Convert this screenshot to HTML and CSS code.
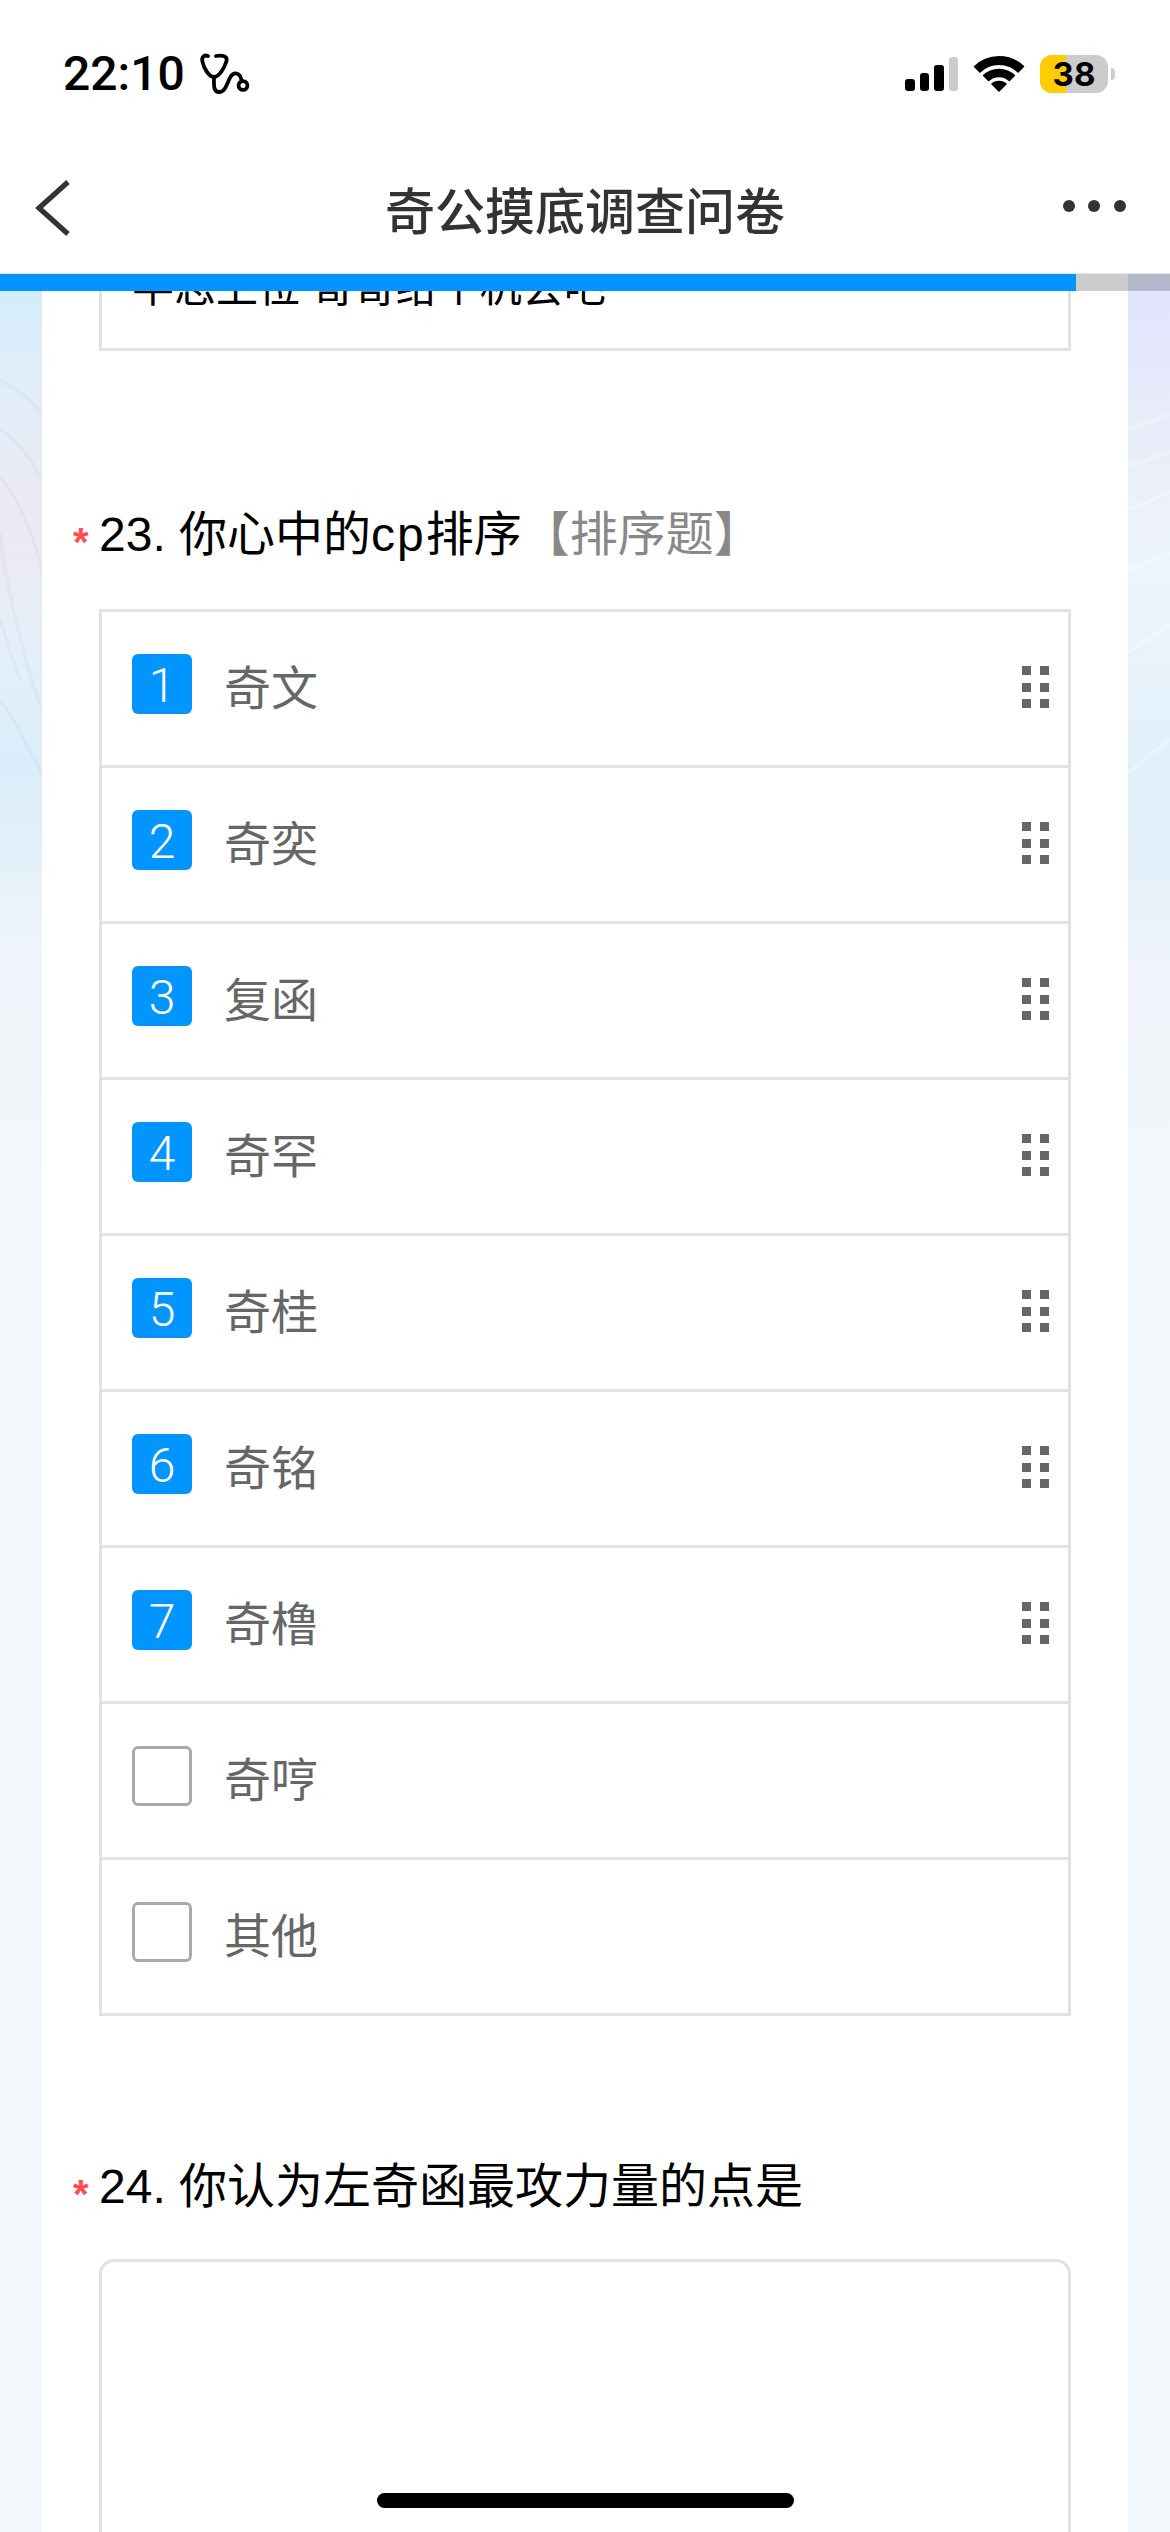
FILE: index.html
```html
<!DOCTYPE html>
<html lang="zh-CN">
<head>
<meta charset="utf-8">
<title>奇公摸底调查问卷</title>
<link rel="stylesheet" href="styles.css">
</head>
<body>
<div class="page">
  <header class="head">
    <div class="status">
      <div class="status-left">
        <span class="time">22:10</span>
        <svg class="steth" viewBox="0 0 70 60" fill="none" stroke="#000" stroke-width="3.800" stroke-linecap="round">
          <path d="M17 12C13.500 10.500 10.500 13 11.300 17C12.500 24 18 33 23 33C28 33 33.500 24 35.500 17C36.500 13 33 10.500 25 12"/>
          <path d="M23 33C23 40 22 48 28 48C35 48 36 38 40 32C43 28 47 29 49 32C50 34 50 35 51 37"/>
          <circle cx="52" cy="41.500" r="4.400"/>
        </svg>
      </div>
      <div class="status-right">
        <div class="signal"><i class="b1"></i><i class="b2"></i><i class="b3"></i><i class="b4"></i></div>
        <svg class="wifi" viewBox="0 0 80 60" fill="none" stroke="#000">
          <path stroke-width="9" d="M16.700 23.700A31.500 31.500 0 0 1 61.300 23.700"/>
          <path stroke-width="8.500" d="M25.600 32.600A19 19 0 0 1 52.400 32.600"/>
          <path fill="#000" stroke="none" d="M39 46L31 38A11.300 11.300 0 0 1 47 38Z"/>
        </svg>
        <div class="battery"><span class="level"></span><span class="pct">38</span></div>
        <span class="nub"></span>
      </div>
    </div>
    <nav class="nav">
      <svg class="back" viewBox="0 0 40 60" fill="none" stroke="#333" stroke-width="5.200">
        <path d="M34 4L5 30L34 56"/>
      </svg>
      <h1 class="nav-title">奇公摸底调查问卷</h1>
      <div class="more"><i></i><i></i><i></i></div>
    </nav>
  </header>

  <main class="scroll">
    <div class="progress"><div class="progress-fill"></div></div>
    <svg class="decor decor-left" viewBox="0 0 42 500" fill="none" stroke="#b9b9d6" stroke-opacity=".12" stroke-width="3">
      <path d="M0 106C16 114 30 124 42 141"/>
      <path d="M0 155C16 165 32 185 42 207"/>
      <path d="M0 204C18 222 34 260 42 299"/>
      <path d="M0 259C4 300 24 390 42 436"/>
      <path d="M0 345C6 365 14 390 20 406"/>
      <path d="M0 426C16 445 30 480 42 499"/>
    </svg>
    <svg class="decor decor-right" viewBox="0 0 42 500" fill="none" stroke="#fff" stroke-opacity=".25" stroke-width="4">
      <path d="M0 155L42 141"/>
      <path d="M0 192L42 178"/>
      <path d="M0 236L42 218"/>
      <path d="M0 296L42 279"/>
      <path d="M0 379L42 350"/>
      <path d="M0 499L42 465"/>
    </svg>

    <div class="card">
      <div class="answer">半志上位 哥哥给个机会吧</div>

      <section class="question q23">
        <div class="q-title"><span class="star">*</span><span>23. 你心中的<span class="latin">cp</span>排序<span class="q-type">【排序题】</span></span></div>
        <div class="options">
          <div class="option"><span class="check on">1</span><span class="label">奇文</span><span class="grip"><i></i><i></i><i></i><i></i><i></i><i></i></span></div>
          <div class="option"><span class="check on">2</span><span class="label">奇奕</span><span class="grip"><i></i><i></i><i></i><i></i><i></i><i></i></span></div>
          <div class="option"><span class="check on">3</span><span class="label">复函</span><span class="grip"><i></i><i></i><i></i><i></i><i></i><i></i></span></div>
          <div class="option"><span class="check on">4</span><span class="label">奇罕</span><span class="grip"><i></i><i></i><i></i><i></i><i></i><i></i></span></div>
          <div class="option"><span class="check on">5</span><span class="label">奇桂</span><span class="grip"><i></i><i></i><i></i><i></i><i></i><i></i></span></div>
          <div class="option"><span class="check on">6</span><span class="label">奇铭</span><span class="grip"><i></i><i></i><i></i><i></i><i></i><i></i></span></div>
          <div class="option"><span class="check on">7</span><span class="label">奇橹</span><span class="grip"><i></i><i></i><i></i><i></i><i></i><i></i></span></div>
          <div class="option"><span class="check"></span><span class="label">奇哼</span></div>
          <div class="option"><span class="check"></span><span class="label">其他</span></div>
        </div>
      </section>

      <section class="question q24">
        <div class="q-title"><span class="star">*</span><span>24. 你认为左奇函最攻力量的点是</span></div>
        <div class="textarea"></div>
      </section>
    </div>
  </main>

  <div class="home-bar"></div>
</div>
</body>
</html>
```

FILE: styles.css
```css
* { box-sizing: border-box; }
html, body { margin: 0; padding: 0; }
body {
  font-family: "Liberation Sans", "Noto Sans CJK SC", sans-serif;
  background: #fff;
}
i { display: block; }

.page {
  position: relative;
  width: 1170px;
  height: 2532px;
  overflow: hidden;
  display: flex;
  flex-direction: column;
  background: #fff;
}

/* header */
.head { flex: none; background: #fff; height: 274px; border-bottom: 1px solid #e4e4e4; }
.status {
  height: 148px;
  display: flex;
  align-items: center;
  justify-content: space-between;
  padding: 0 55px 0 63px;
}
.status-left { display: flex; align-items: center; }
.time {
  font-family: Roboto, "Liberation Sans", sans-serif;
  font-size: 48px;
  font-weight: 500;
  color: #000;
  line-height: 56px;
}
.steth { width: 70px; height: 60px; margin-left: 6px; }
.status-right { display: flex; align-items: center; }
.signal { display: flex; align-items: flex-end; gap: 5px; height: 34px; }
.signal i { width: 9.500px; background: #000; border-radius: 3px; }
.signal .b1 { height: 12px; }
.signal .b2 { height: 18px; }
.signal .b3 { height: 26px; }
.signal .b4 { height: 34px; background: #ccc; }
.wifi { width: 80px; height: 60px; margin: 3px 0 0 2px; }
.battery {
  position: relative;
  width: 68px;
  height: 38px;
  border-radius: 12px;
  background: #ccc;
  overflow: hidden;
}
.level { display: block; width: 26px; height: 100%; background: #ffcc00; }
.pct {
  position: absolute;
  inset: 0;
  display: flex;
  align-items: center;
  justify-content: center;
  font-family: Inter, "Liberation Sans", sans-serif;
  font-size: 33px;
  font-weight: 700;
  color: #000;
  line-height: 1;
}
.nub { width: 4px; height: 12px; margin-left: 3px; background: #ccc; border-radius: 0 6px 6px 0; }

.nav {
  height: 120px;
  display: grid;
  grid-template-columns: 1fr auto 1fr;
  align-items: center;
  padding: 0 44px;
}
.back { width: 40px; height: 60px; margin-left: -10px; }
.nav-title {
  margin: 0;
  font-family: "Noto Sans CJK SC", sans-serif;
  font-size: 50px;
  font-weight: 500;
  line-height: 70px;
  color: #333;
  white-space: nowrap;
}
.more { justify-self: end; display: flex; gap: 13.600px; margin-top: -4px; }
.more i { width: 12px; height: 12px; border-radius: 50%; background: #333; }

/* scrolling area */
.scroll {
  position: relative;
  flex: 1;
  min-height: 0;
  overflow: hidden;
  background-color: #f2f7fb;
  background-image:
    linear-gradient(180deg, #d5ecfb 0, #d9edfb 60px, #e2edf8 120px, #ece9f2 264px, #e7edf6 340px, #e0effa 408px, #d9edfa 494px, #eef4f9 666px, #f2f7fb 906px),
    linear-gradient(180deg, #e1e4fd 0, #e3e6fc 60px, #e9ecf9 150px, #eef4fb 293px, #e8f2fb 400px, #e0f0fa 494px, #e4f0fa 597px, #f0f4fa 695px, #f2f7fb 906px);
  background-size: 42px 100%, 42px 100%;
  background-position: left top, right top;
  background-repeat: no-repeat;
}
.progress {
  position: absolute;
  z-index: 2;
  top: 0;
  left: 0;
  right: 0;
  height: 17px;
  background: rgba(0, 0, 0, .2);
}
.progress-fill { width: 1076px; height: 100%; background: #0095ff; }

.decor { position: absolute; top: 0; width: 42px; height: 500px; }
.decor-left { left: 0; }
.decor-right { right: 0; }

.card {
  width: 1086px;
  margin: -30px auto 0;
  background: #fff;
  min-height: 2300px;
  padding: 0 57px;
}
.answer {
  border: 3px solid #e2e2e2;
  border-top: 0;
  padding: 16px 30px 32px;
  font-size: 42px;
  line-height: 56px;
  color: #000;
  white-space: nowrap;
}

.question { position: relative; }
.q23 { padding-top: 151px; }
.q24 { padding-top: 138px; }
.q-title {
  position: relative;
  font-size: 48px;
  line-height: 66px;
  color: #000;
  white-space: nowrap;
  margin-bottom: 41px;
}
.q24 .q-title { margin-bottom: 39px; }
.latin { letter-spacing: 2px; }
.star {
  position: absolute;
  left: -26px;
  top: 16px;
  font-size: 40px;
  font-weight: 700;
  line-height: 48px;
  color: #ff4d4f;
}
.q-type { color: #888; }

.options { border: 3px solid #e2e2e2; }
.option {
  height: 156px;
  border-bottom: 3px solid #e2e2e2;
  display: flex;
  align-items: center;
  padding: 0 19px 0 30px;
}
.option:last-child { height: 153px; border-bottom: 0; }
.check {
  flex: none;
  width: 60px;
  height: 60px;
  margin-bottom: 9px;
  border: 3px solid #aaa;
  border-radius: 6px;
  background: #fff;
}
.check.on {
  border: 0;
  padding-top: 3px;
  background: #0095ff;
  color: #fff;
  display: flex;
  align-items: center;
  justify-content: center;
  font-family: Roboto, "Liberation Sans", sans-serif;
  font-size: 48px;
  font-weight: 300;
  line-height: 57px;
}
.label {
  flex: 1;
  margin-left: 32px;
  font-size: 47px;
  line-height: 66px;
  color: #666;
}
.grip {
  flex: none;
  display: grid;
  grid-template-columns: 9px 9px;
  grid-auto-rows: 9px;
  column-gap: 9px;
  row-gap: 7.500px;
  margin-bottom: 3px;
}
.grip i { background: #666; }

.textarea {
  height: 500px;
  border: 3px solid #e2e2e2;
  border-radius: 15px;
  background: #fff;
}

.home-bar {
  position: absolute;
  left: 377px;
  top: 2493px;
  width: 417px;
  height: 15px;
  border-radius: 8px;
  background: #000;
}
```
